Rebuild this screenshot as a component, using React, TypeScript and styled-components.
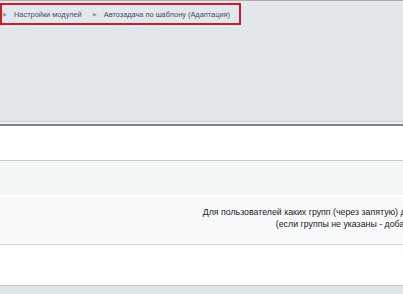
import React from "react"
import styled, { createGlobalStyle } from "styled-components"

const GlobalStyle = createGlobalStyle`
    html, body {
        margin: 0;
        padding: 0;
        background: #dfe6e9;
        font-family: "Liberation Sans", Arial, sans-serif;
        overflow: hidden;
    }
`

const Page = styled.div`
    width: 403px;
    display: flex;
    flex-direction: column;
`

const Header = styled.div`
    height: 121px;
    border-top: 1px solid #a9aeb1;
    background: #e2e8eb;
    padding-top: 2px;
    box-sizing: border-box;
`

const Crumbs = styled.div`
    width: 241px;
    height: 22px;
    box-sizing: border-box;
    border: 2px solid #d11a2a;
    display: flex;
    align-items: center;
    padding-left: 1px;
    font-size: 7.4px;
    color: #3b4f6b;
    white-space: nowrap;
`

const Arrow = styled.span<{ $lead: number }>`
    font-size: 4.5px;
    color: #8a97a5;
    margin-left: ${(p) => p.$lead}px;
    margin-right: 7px;
`

const Divider = styled.div`
    height: 5px;
    border-top: 1px solid #c5ced2;
    border-bottom: 2px solid #7c8488;
    background: #eef2f3;
    box-sizing: border-box;
`

const Row = styled.div<{ $h: number; $bg: string; $line: string }>`
    height: ${(p) => p.$h}px;
    background: ${(p) => p.$bg};
    border-bottom: 1px solid ${(p) => p.$line};
    box-sizing: border-box;
    overflow: hidden;
`

const Gap = styled.div`
    height: 2px;
    background: #ffffff;
`

const Label = styled.div`
    width: 744px;
    padding-top: 9px;
    text-align: center;
    font-size: 8.8px;
    line-height: 12px;
    color: #1a1a1a;
    white-space: nowrap;
`

export default function App() {
    return (
        <Page>
            <GlobalStyle />
            <Header>
                <Crumbs>
                    <Arrow $lead={0}>▶</Arrow>
                    <span>Настройки модулей</span>
                    <Arrow $lead={11}>▶</Arrow>
                    <span>Автозадача по шаблону (Адаптация)</span>
                </Crumbs>
            </Header>
            <Divider />
            <Row $h={35} $bg="#ffffff" $line="#c9cbcc" />
            <Row $h={34} $bg="#f2f6f7" $line="#f2f6f7" />
            <Gap />
            <Row $h={48} $bg="#f8fafb" $line="#d8dadb">
                <Label>
                    Для пользователей каких групп (через запятую) добавлять пункт меню автозадачи
                    <br />
                    (если группы не указаны - добавлять для всех)
                </Label>
            </Row>
            <Row $h={41} $bg="#ffffff" $line="#c6ccce" />
        </Page>
    )
}
